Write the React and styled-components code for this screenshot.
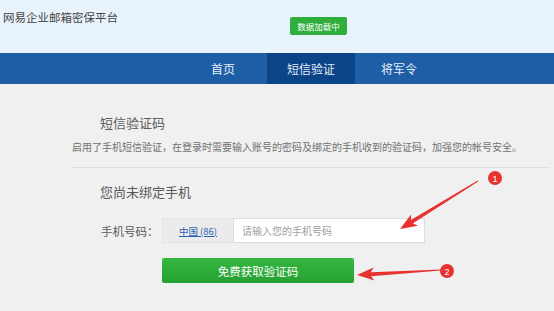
import React from "react";
import styled, { createGlobalStyle } from "styled-components";

const GlobalStyle = createGlobalStyle`
  html, body {
    margin: 0;
    padding: 0;
    background: #f0f0f0;
    font-family: "Noto Sans CJK SC", "Noto Sans", sans-serif;
  }
`

const Page = styled.div`
  position: relative;
  width: 554px;
  height: 311px;
  overflow: hidden;
  background: #f0f0f0;
`

const Header = styled.div`
  display: grid;
  grid-template-columns: 290px auto;
  align-items: start;
  height: 53px;
  background: #e9f3fc;
`

const Title = styled.div`
  margin: 9px 0 0 3px;
  font-size: 11.5px;
  line-height: 16px;
  color: #444;
`

const Badge = styled.span`
  justify-self: start;
  margin-top: 17px;
  width: 57px;
  height: 18px;
  line-height: 18px;
  text-align: center;
  border-radius: 2px;
  background: #2fae3c;
  color: #fff;
  font-size: 8.5px;
`

const Nav = styled.div`
  display: flex;
  height: 31px;
  padding-left: 179px;
  background: #1e5ea7;
`

const NavItem = styled.div`
  width: 88px;
  line-height: 31px;
  text-align: center;
  font-size: 12px;
  color: #e6eef8;
  background: ${p => (p.active ? "#0b4587" : "transparent")};
`

const Content = styled.div`
  padding: 0 4px 0 72px;
`

const Heading = styled.div`
  margin: ${p => p.top}px 0 0 28px;
  font-size: 13px;
  line-height: 16px;
  color: #5a5a5a;
`

const Desc = styled.div`
  margin-top: 9px;
  font-size: 10px;
  line-height: 14px;
  color: #707070;
  white-space: nowrap;
`

const Divider = styled.div`
  margin-top: 13px;
  height: 1px;
  background: #dedede;
`

const Row = styled.div`
  display: flex;
  align-items: center;
  margin: 18px 0 0 29px;
  height: 25px;
`

const Label = styled.span`
  width: 61px;
  font-size: 11.5px;
  color: #5a5a5a;
`

const Country = styled.div`
  width: 71px;
  height: 25px;
  display: flex;
  align-items: center;
  justify-content: center;
  background: #ebebeb;
  box-sizing: border-box;
  border: 1px solid #e4e4e4;
  border-right: none;
`

const CountryLink = styled.a`
  font-size: 9.5px;
  color: #2a62b0;
  text-decoration: underline;
`

const Input = styled.input`
  width: 192px;
  height: 25px;
  box-sizing: border-box;
  border: 1px solid #dcdcdc;
  background: #fff;
  padding: 0 8px;
  font-family: inherit;
  font-size: 10px;
  outline: none;
  &::placeholder {
    color: #a0a0a0;
  }
`

const Button = styled.button`
  display: block;
  margin: 15px 0 0 90px;
  width: 192px;
  height: 25px;
  border: none;
  border-radius: 2px;
  background: linear-gradient(#35b841, #25a032);
  color: #fff;
  font-family: inherit;
  font-size: 11.5px;
`

const Marks = styled.svg`
  position: absolute;
  left: 0;
  top: 0;
  pointer-events: none;
`

const Arrow = ({ from, to }) => {
  const [x1, y1] = from
  const [x2, y2] = to
  const dx = x2 - x1
  const dy = y2 - y1
  const len = Math.hypot(dx, dy)
  const ux = dx / len
  const uy = dy / len
  const nx = -uy
  const ny = ux
  const head = 14
  const hx = x2 - ux * head
  const hy = y2 - uy * head
  const pts = [
    [x1 + nx * 0.5, y1 + ny * 0.5],
    [hx + nx * 2, hy + ny * 2],
    [hx - ux * 3 + nx * 6.5, hy - uy * 3 + ny * 6.5],
    [x2, y2],
    [hx - ux * 3 - nx * 6.5, hy - uy * 3 - ny * 6.5],
    [hx - nx * 2, hy - ny * 2],
    [x1 - nx * 0.5, y1 - ny * 0.5],
  ]
  return <polygon points={pts.map(p => p.join(",")).join(" ")} fill="#e8322f" />
}

const Num = ({ x, y, n }) => (
  <g>
    <circle cx={x} cy={y} r="7" fill="#e8322f" />
    <text x={x} y={y + 3.5} textAnchor="middle" fontSize="9" fill="#fff" fontFamily="Liberation Sans, sans-serif">{n}</text>
  </g>
)

export default function App() {
  return (
    <Page>
      <GlobalStyle />
      <Header>
        <Title>网易企业邮箱密保平台</Title>
        <Badge>数据加载中</Badge>
      </Header>
      <Nav>
        <NavItem>首页</NavItem>
        <NavItem active>短信验证</NavItem>
        <NavItem>将军令</NavItem>
      </Nav>
      <Content>
        <Heading top={31}>短信验证码</Heading>
        <Desc>启用了手机短信验证，在登录时需要输入账号的密码及绑定的手机收到的验证码，加强您的帐号安全。</Desc>
        <Divider />
        <Heading top={16}>您尚未绑定手机</Heading>
        <Row>
          <Label>手机号码：</Label>
          <Country>
            <CountryLink>中国 (86)</CountryLink>
          </Country>
          <Input placeholder="请输入您的手机号码" />
        </Row>
        <Button>免费获取验证码</Button>
      </Content>
      <Marks width="554" height="311">
        <Arrow from={[478, 181]} to={[400, 229]} />
        <Num x={495} y={178} n="1" />
        <Arrow from={[441, 270]} to={[357, 275]} />
        <Num x={447} y={271} n="2" />
      </Marks>
    </Page>
  )
}
